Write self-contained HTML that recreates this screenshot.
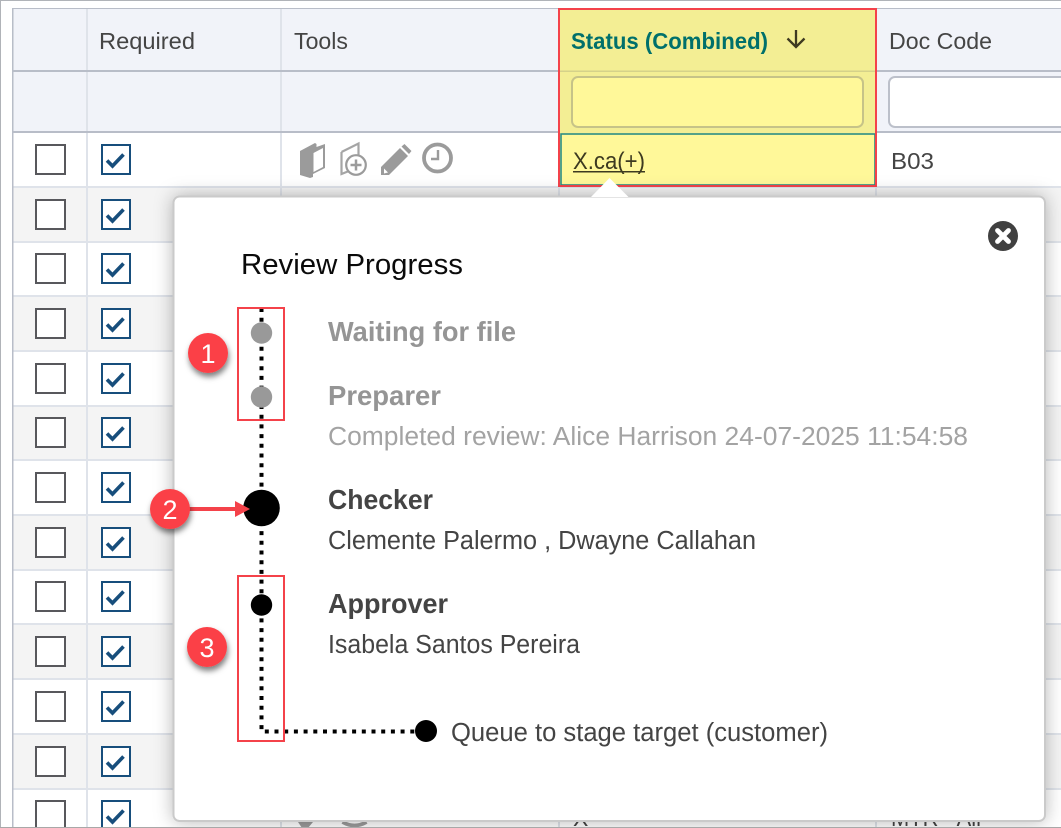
<!DOCTYPE html>
<html><head><meta charset="utf-8"><title>Review Progress</title>
<style>
html,body{margin:0;padding:0;background:#fff;width:1061px;height:828px;overflow:hidden}
svg{display:block}
text{font-family:"Liberation Sans",sans-serif}
</style></head><body>
<svg width="1061" height="828" viewBox="0 0 1061 828" xmlns="http://www.w3.org/2000/svg">
<defs>
<filter id="pop" x="-10%" y="-10%" width="120%" height="120%"><feDropShadow dx="0" dy="0" stdDeviation="9" flood-color="#000" flood-opacity=".28"/></filter>
<filter id="bs" x="-40%" y="-40%" width="180%" height="190%"><feDropShadow dx="1" dy="4" stdDeviation="3" flood-color="#000" flood-opacity=".5"/></filter>
<g id="cb"><rect x="36" y="145" width="29" height="29" fill="#fff" stroke="#58585c" stroke-width="2"/><rect x="102" y="145" width="28" height="29" fill="#fff" stroke="#174e7c" stroke-width="2"/><path d="M107 160.500l5.500 5.500 11-11.500" fill="none" stroke="#174e7c" stroke-width="3.600"/></g>
</defs>

<rect x="0" y="0" width="1061" height="1" fill="#b0b3b8"/>
<rect x="0" y="0" width="1" height="828" fill="#b0b3b8"/>

<rect x="12" y="8" width="1049" height="125" fill="#f1f3f9"/>
<rect x="13" y="133" width="1048" height="54" fill="#fff"/>
<rect x="13" y="187" width="1048" height="55" fill="#f4f4f4"/>
<rect x="13" y="296" width="1048" height="55" fill="#f4f4f4"/>
<rect x="13" y="406" width="1048" height="55" fill="#f4f4f4"/>
<rect x="13" y="515" width="1048" height="55" fill="#f4f4f4"/>
<rect x="13" y="625" width="1048" height="55" fill="#f4f4f4"/>
<rect x="13" y="734" width="1048" height="55" fill="#f4f4f4"/>

<g fill="#dfe3ea">
<rect x="13" y="186" width="1048" height="2"/>
<rect x="13" y="241" width="1048" height="2"/>
<rect x="13" y="295" width="1048" height="2"/>
<rect x="13" y="350" width="1048" height="2"/>
<rect x="13" y="405" width="1048" height="2"/>
<rect x="13" y="459" width="1048" height="2"/>
<rect x="13" y="514" width="1048" height="2"/>
<rect x="13" y="569" width="1048" height="2"/>
<rect x="13" y="623" width="1048" height="2"/>
<rect x="13" y="678" width="1048" height="2"/>
<rect x="13" y="733" width="1048" height="2"/>
<rect x="13" y="788" width="1048" height="2"/>
<rect x="86" y="8" width="2" height="819"/>
<rect x="280" y="8" width="2" height="819"/>
<rect x="558" y="133" width="2" height="694"/>
<rect x="875" y="133" width="2" height="694"/>
</g>
<rect x="12" y="8" width="1049" height="1" fill="#b8bdc8"/>
<rect x="12" y="8" width="1.500" height="819" fill="#b8bdc8"/>
<rect x="13" y="70" width="1048" height="2" fill="#b8bdc8"/>
<rect x="13" y="131" width="1048" height="2" fill="#b8bdc8"/>

<text x="99" y="49" font-size="23" fill="#454545" textLength="96" lengthAdjust="spacingAndGlyphs">Required</text>
<text x="294" y="49" font-size="23" fill="#454545" textLength="54" lengthAdjust="spacingAndGlyphs">Tools</text>
<text x="889" y="49" font-size="23" fill="#454545" textLength="103" lengthAdjust="spacingAndGlyphs">Doc Code</text>

<rect x="889" y="77" width="200" height="50" rx="6" fill="#fff" stroke="#bcc0ca" stroke-width="2"/>

<rect x="559" y="9" width="317" height="124" fill="#f3ee94"/>
<rect x="559" y="70.500" width="317" height="1.500" fill="#d5d28a"/>
<rect x="572" y="77" width="291" height="50" rx="6" fill="#fff899" stroke="#c6c388" stroke-width="2"/>
<text x="571" y="49" font-size="23" font-weight="700" fill="#00706b" textLength="197" lengthAdjust="spacingAndGlyphs">Status (Combined)</text>
<path d="M796 30v17M787.500 38.500l8.500 8.500 8.500-8.500" fill="none" stroke="#3e3a20" stroke-width="2.300"/>
<rect x="560" y="133" width="315" height="52" fill="#fff899"/>
<rect x="561" y="134" width="314" height="51" fill="none" stroke="#2b8c84" stroke-width="1.600"/>
<text x="573" y="169" font-size="24" fill="#3d3a20" textLength="72" lengthAdjust="spacingAndGlyphs">X.ca(+)</text>
<rect x="573" y="171" width="72" height="1.500" fill="#3d3a20"/>
<text x="891" y="169" font-size="23" fill="#454545" textLength="43" lengthAdjust="spacingAndGlyphs">B03</text>
<rect x="559" y="9" width="317" height="177" fill="none" stroke="#f4424a" stroke-width="2"/>

<use href="#cb" y="0"/>
<use href="#cb" y="55"/>
<use href="#cb" y="109"/>
<use href="#cb" y="164"/>
<use href="#cb" y="219"/>
<use href="#cb" y="273"/>
<use href="#cb" y="328"/>
<use href="#cb" y="383"/>
<use href="#cb" y="437"/>
<use href="#cb" y="492"/>
<use href="#cb" y="547"/>
<use href="#cb" y="602"/>
<use href="#cb" y="656"/>

<g fill="#9b9b9b">
<path d="M300 151l15-8 1.500 1v3l8.500-3v24l-12 6v3l-3 1-10-3z"/>
<path d="M313.500 153l9.500-5v19l-9.500 5z" fill="#fff"/>
<path d="M341.500 152l17-8.500v13M341.500 152v22l10-4" fill="none" stroke="#a5a5a5" stroke-width="2.200"/>
<circle cx="356" cy="165" r="9.800" fill="#fff" stroke="#9b9b9b" stroke-width="2.200"/>
<path d="M356 159.500v11M350.500 165h11" stroke="#9b9b9b" stroke-width="2.500" fill="none"/>
<path d="M381 175v-8l19-19 8 8-19 19zM401.500 146.500l3-2.500 7 7-2.500 3z"/>
<path d="M384 168.500l4 4-4 1z" fill="#fff"/>
<circle cx="437.500" cy="158" r="13.500" fill="none" stroke="#9b9b9b" stroke-width="3.800"/>
<path d="M438 150v9h-7" fill="none" stroke="#9b9b9b" stroke-width="2.400"/>
<path d="M298 822h15l-5 6h-6z"/>
<path d="M342.500 822q12 7 24 0" fill="none" stroke="#9b9b9b" stroke-width="3.800"/>
</g>
<text x="891" y="826" font-size="23" fill="#454545" textLength="90" lengthAdjust="spacingAndGlyphs">MTR - All</text>
<text x="573" y="826" font-size="23" fill="#454545">X</text>

<rect x="173.500" y="196.500" width="871.500" height="624.500" rx="6" fill="#fff" stroke="#cacaca" stroke-width="2" filter="url(#pop)"/>
<path d="M591 197L609.500 178 628.500 197z" fill="#fff"/>
<rect x="0" y="827" width="1061" height="1" fill="#a8a8a8"/>

<circle cx="1003" cy="236" r="15" fill="#404040"/>
<path d="M997.500 230.500l11 11M1008.500 230.500l-11 11" stroke="#fff" stroke-width="4.800" stroke-linecap="round"/>

<text x="241" y="274" font-size="29" fill="#0a0a0a" textLength="222" lengthAdjust="spacingAndGlyphs">Review Progress</text>

<path d="M261.500 308V731.500H420" fill="none" stroke="#000" stroke-width="4" stroke-dasharray="4 5.700"/>
<circle cx="261.500" cy="333" r="10.700" fill="#999"/>
<circle cx="261.500" cy="397" r="10.700" fill="#999"/>
<circle cx="261.500" cy="508" r="18.300" fill="#000"/>
<circle cx="261.500" cy="605" r="10.700" fill="#000"/>
<circle cx="426" cy="731" r="11" fill="#000"/>

<text x="328" y="341" font-size="27.500" font-weight="700" fill="#959595" textLength="188" lengthAdjust="spacingAndGlyphs">Waiting for file</text>
<text x="328" y="405" font-size="27.500" font-weight="700" fill="#959595" textLength="113" lengthAdjust="spacingAndGlyphs">Preparer</text>
<text x="328" y="445" font-size="25.500" fill="#a3a3a3" textLength="640" lengthAdjust="spacingAndGlyphs">Completed review: Alice Harrison 24-07-2025 11:54:58</text>
<text x="328" y="509" font-size="27.500" font-weight="700" fill="#444" textLength="105" lengthAdjust="spacingAndGlyphs">Checker</text>
<text x="328" y="549" font-size="25.500" fill="#444" textLength="428" lengthAdjust="spacingAndGlyphs">Clemente Palermo , Dwayne Callahan</text>
<text x="328" y="613" font-size="27.500" font-weight="700" fill="#444" textLength="120" lengthAdjust="spacingAndGlyphs">Approver</text>
<text x="328" y="653" font-size="25.500" fill="#444" textLength="252" lengthAdjust="spacingAndGlyphs">Isabela Santos Pereira</text>
<text x="451" y="741" font-size="25.500" fill="#444" textLength="377" lengthAdjust="spacingAndGlyphs">Queue to stage target (customer)</text>

<rect x="238" y="308" width="46" height="112" fill="none" stroke="#f4424a" stroke-width="2"/>
<rect x="238" y="576" width="46" height="165" fill="none" stroke="#f4424a" stroke-width="2"/>

<path d="M188 509H238" stroke="#f4424a" stroke-width="4" fill="none"/>
<path d="M235 501L250 509 235 517z" fill="#f4424a"/>
<circle cx="208" cy="353" r="20" fill="#fb4146" filter="url(#bs)"/>
<circle cx="170" cy="509" r="20" fill="#fb4146" filter="url(#bs)"/>
<circle cx="207" cy="647" r="20" fill="#fb4146" filter="url(#bs)"/>
<text x="208" y="363" font-size="27" fill="#fff" text-anchor="middle">1</text>
<text x="170" y="519" font-size="27" fill="#fff" text-anchor="middle">2</text>
<text x="207" y="657" font-size="27" fill="#fff" text-anchor="middle">3</text>
</svg>
</body></html>
